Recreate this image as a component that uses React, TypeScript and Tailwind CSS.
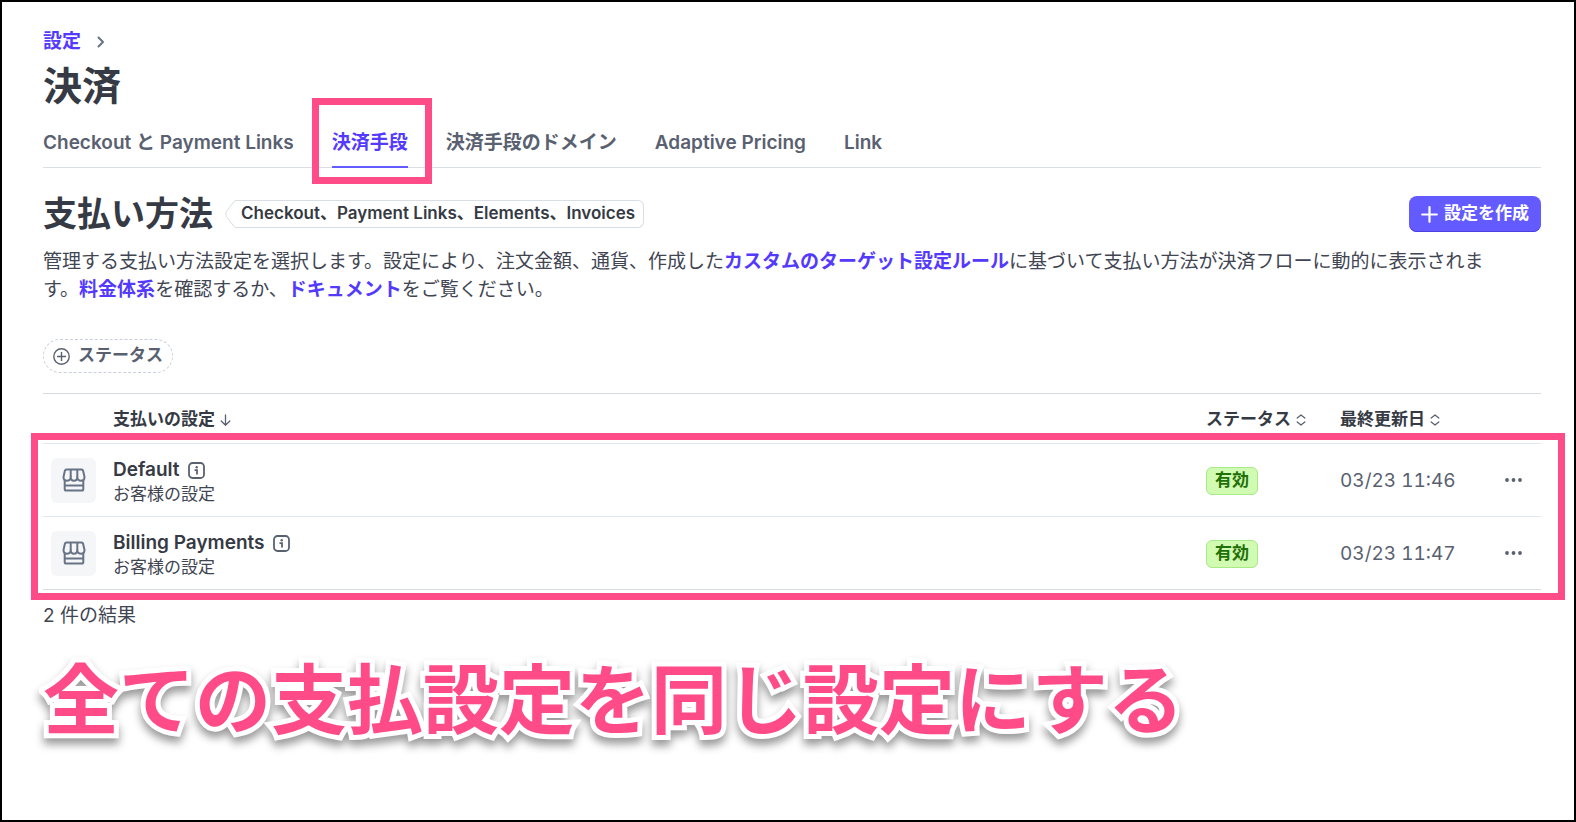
import type { ReactNode } from "react";

type Setting = { name: string; owner: string; status: string; updated: string };

const settings: Setting[] = [
  { name: "Default", owner: "お客様の設定", status: "有効", updated: "03/23 11:46" },
  { name: "Billing Payments", owner: "お客様の設定", status: "有効", updated: "03/23 11:47" },
];

const tabs = ["Checkout と Payment Links", "決済手段", "決済手段のドメイン", "Adaptive Pricing", "Link"];
const activeTab = "決済手段";

function StoreIcon() {
  return (
    <svg className="size-6" viewBox="0 0 24 24" fill="none" stroke="#687385" strokeWidth="2" strokeLinejoin="round" aria-hidden="true">
      <path d="M4.500 1.500h15q1.300 0 1.600 1.200l1.400 6.300c0 2.200-1.500 3.700-3.500 3.700S15.300 11.200 15.300 9c0 2.200-1.400 3.700-3.300 3.700S8.700 11.200 8.700 9c0 2.200-1.700 3.700-3.700 3.700S1.500 11.200 1.500 9l1.400-6.300q.3-1.200 1.600-1.200z" />
      <path d="M8.700 9V1.500M15.300 9V1.500M2.700 12v9q0 1.600 1.600 1.600h15.400q1.600 0 1.600-1.600v-9M2.700 17.500h18.600" />
    </svg>
  );
}

function InfoIcon() {
  return (
    <svg className="size-[17px]" viewBox="0 0 17 17" fill="none" stroke="#596171" strokeWidth="1.800" aria-hidden="true">
      <rect x="1" y="1" width="15" height="15" rx="3.500" />
      <path d="M6.500 8.200H9v4.300" />
      <circle cx="8.700" cy="5.200" r="1.200" fill="#596171" stroke="none" />
    </svg>
  );
}

function SortIcon() {
  return (
    <svg className="h-3 w-[10px]" viewBox="0 0 10 12" fill="none" stroke="#596171" strokeWidth="1.300" strokeLinecap="round" strokeLinejoin="round" aria-hidden="true">
      <path d="M1.200 4 5 1l3.800 3M1.200 8 5 11l3.800-3" />
    </svg>
  );
}

function TextLink({ children }: { children: ReactNode }) {
  return (
    <a href="#" className="font-bold text-[#533afd]">
      {children}
    </a>
  );
}

export default function App() {
  return (
    <div className="min-h-screen border-2 border-black bg-white pt-[26px] pr-[33px] pb-12 pl-[41px] font-['Inter','Noto_Sans_CJK_JP',sans-serif] text-[#353a44]">
      <nav aria-label="パンくずリスト" className="flex items-center gap-4 text-[19px] leading-7">
        <a href="#" className="font-bold text-[#533afd]">設定</a>
        <svg className="h-3 w-2" viewBox="0 0 8 12" fill="none" stroke="#687385" strokeWidth="2" strokeLinecap="round" strokeLinejoin="round" aria-hidden="true">
          <path d="M1.500 1.500 6 6l-4.500 4.500" />
        </svg>
      </nav>
      <h1 className="mt-1 text-[39px] leading-[52px] font-bold">決済</h1>

      <div role="tablist" className="mt-3 flex gap-[38px] border-b border-[#d8dee4] text-[19px] leading-7 font-semibold text-[#596171]">
        {tabs.map((tab) => (
          <div key={tab} className="relative -mb-px">
            <button
              type="button"
              role="tab"
              aria-selected={tab === activeTab}
              className="border-b-2 border-transparent pt-[5px] pb-[9px] aria-selected:border-[#635bff] aria-selected:text-[#533afd]"
            >
              {tab}
            </button>
            {tab === activeTab && <div className="pointer-events-none absolute -top-[26px] -right-6 -bottom-4 -left-5 border-[7px] border-[#ff4b88]" />}
          </div>
        ))}
      </div>

      <main>
        <div className="mt-6 flex items-center justify-between">
          <div className="flex items-center gap-3">
            <h2 className="text-[34px] leading-[44px] font-bold">支払い方法</h2>
            <div className="flex h-7 text-[17px] font-semibold">
              <svg className="h-7 w-3" viewBox="0 0 12 28" fill="none" stroke="#d8dee4" aria-hidden="true">
                <path d="M12 .5h-1Q10 .5 9 1.500L1.500 11.500Q0 14 1.500 16.500L9 26.500q1 1 2 1h1" />
              </svg>
              <span className="flex items-center rounded-r-md border border-l-0 border-[#d8dee4] pr-2 pl-1">Checkout、Payment Links、Elements、Invoices</span>
            </div>
          </div>
          <button type="button" className="flex h-9 items-center gap-1.5 rounded-lg bg-[#635bff] px-3 text-[17px] font-bold text-white shadow-[inset_0_-1px_0_#4b3fe0]">
            <svg className="size-[17px]" viewBox="0 0 17 17" stroke="currentColor" strokeWidth="2.200" strokeLinecap="round" aria-hidden="true">
              <path d="M8.500 1.200v14.600M1.200 8.500h14.600" />
            </svg>
            設定を作成
          </button>
        </div>
        <p className="mt-3 pr-10 text-[19px] leading-7 text-[#414552]">
          管理する支払い方法設定を選択します。設定により、注文金額、通貨、作成した<TextLink>カスタムのターゲット設定ルール</TextLink>に基づいて支払い方法が決済フローに動的に表示されます。<TextLink>料金体系</TextLink>を確認するか、<TextLink>ドキュメント</TextLink>をご覧ください。
        </p>

        <button type="button" className="mt-[35px] flex h-[34px] items-center gap-2 rounded-full border border-dashed border-[#c9d0d8] px-[9px] text-[17px] font-bold text-[#596171]">
          <svg className="size-[17px]" viewBox="0 0 17 17" fill="none" stroke="currentColor" strokeWidth="1.400" aria-hidden="true">
            <circle cx="8.500" cy="8.500" r="7.700" />
            <path d="M8.500 4v9M4 8.500h9" />
          </svg>
          ステータス
        </button>

        <div className="relative mt-5">
          <table className="w-full border-collapse text-left">
            <thead className="border-y border-[#e3e8ee] border-t-[#d5dbe1] text-[17px]">
              <tr className="h-[50px]">
                <th colSpan={2} className="pt-0.5 pl-[70px] font-bold">
                  <span className="flex items-center gap-[5px]">
                    支払いの設定
                    <svg className="h-3 w-[11px]" viewBox="0 0 11 12" fill="none" stroke="#596171" strokeWidth="1.300" strokeLinecap="round" strokeLinejoin="round" aria-hidden="true">
                      <path d="M5.500 1v10M1.200 7l4.300 4.200L9.800 7" />
                    </svg>
                  </span>
                </th>
                <th className="w-[134px] pt-0.5 font-bold">
                  <span className="flex items-center gap-[5px]">ステータス<SortIcon /></span>
                </th>
                <th className="w-[165px] pt-0.5 font-bold">
                  <span className="flex items-center gap-[5px]">最終更新日<SortIcon /></span>
                </th>
                <th className="w-9" aria-label="操作" />
              </tr>
            </thead>
            <tbody>
              {settings.map((s) => (
                <tr key={s.name} className="h-[73px] border-b border-[#e3e8ee] last:border-[#d5dbe1]">
                  <td className="w-[70px] pl-2">
                    <div className="flex size-[45px] items-center justify-center rounded-md bg-[#f5f6f8]">
                      <StoreIcon />
                    </div>
                  </td>
                  <td className="pt-1">
                    <div className="flex items-center gap-2 text-[19px] leading-6 font-semibold">
                      {s.name}
                      <InfoIcon />
                    </div>
                    <div className="text-[17px] leading-6 text-[#414552]">{s.owner}</div>
                  </td>
                  <td className="pt-0.5">
                    <span className="inline-flex h-7 items-center rounded-md border border-[#a6eb84] bg-[#d1fab3] px-2 text-[17px] font-bold text-[#217005]">{s.status}</span>
                  </td>
                  <td className="pt-0.5 text-[19px] text-[#596171] tabular-nums">{s.updated}</td>
                  <td>
                    <button type="button" aria-label="その他の操作" className="block py-2">
                      <svg className="h-1 w-[17px]" viewBox="0 0 17 4" fill="#596171" aria-hidden="true">
                        <circle cx="2" cy="2" r="1.900" />
                        <circle cx="8.500" cy="2" r="1.900" />
                        <circle cx="15" cy="2" r="1.900" />
                      </svg>
                    </button>
                  </td>
                </tr>
              ))}
            </tbody>
          </table>
          <div className="pointer-events-none absolute top-10 -right-6 -bottom-2.5 -left-3 border-[7px] border-[#ff4b88]" />
        </div>
        <p className="mt-3 text-[19px] leading-7 text-[#414552]">2 件の結果</p>
        <p className="mt-5 text-[76px] leading-[100px] font-bold whitespace-nowrap text-[#ff4b88] drop-shadow-[0_6px_4px_rgba(0,0,0,0.4)] [-webkit-text-stroke:10px_white] [paint-order:stroke_fill] [stroke-linejoin:round]">
          全ての支払設定を同じ設定にする
        </p>
      </main>
    </div>
  );
}
